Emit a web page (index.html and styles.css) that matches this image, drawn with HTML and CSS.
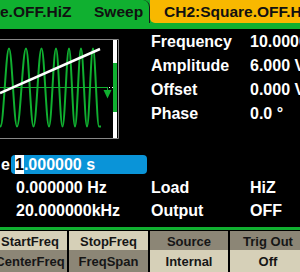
FILE: index.html
```html
<!DOCTYPE html>
<html>
<head>
<meta charset="utf-8">
<link rel="stylesheet" href="styles.css">
</head>
<body>
<div class="screen">
  <header class="header">
    <div class="tab tab-ch1">e.OFF.HiZ</div>
    <div class="tab tab-sweep">Sweep</div>
    <div class="tab tab-ch2">CH2:Square.OFF.HiZ</div>
  </header>

  <section class="top">
    <div class="graph">
      <svg class="wave" width="120" height="102" viewBox="0 38 120 102">
        <path class="frame" d="M-2 39.5 H118.5 V138.5 H-2"/>
        <rect x="113" y="40" width="4" height="23" fill="#ffffff"/>
        <rect x="113" y="63" width="4" height="49" fill="#10b030"/>
        <rect x="113" y="112" width="4" height="26" fill="#ffffff"/>
        <path class="chirp" d="M-8.5,48.5 C-5.23,48.5 -2.77,126.5 0.5,126.5 C3.59,126.5 5.91,48.5 9,48.5 C11.9,48.5 14.1,126.5 17,126.5 C20.27,126.5 22.73,48.5 26,48.5 C28.72,48.5 30.78,126.5 33.5,126.5 C36.4,126.5 38.6,48.5 41.5,48.5 C44.22,48.5 46.28,126.5 49,126.5 C51.54,126.5 53.46,48.5 56,48.5 C58.36,48.5 60.14,126.5 62.5,126.5 C64.86,126.5 66.64,48.5 69,48.5 C71.18,48.5 72.82,126.5 75,126.5 C77.18,126.5 78.82,48.5 81,48.5 C83.18,48.5 84.82,126.5 87,126.5 C89.18,126.5 90.82,48.5 93,48.5 C95.18,48.5 96.82,126.5 99,126.5 L101,126.5"/>
        <path class="marker-line" d="M0 87.5 H108 M107.5 87 V91"/>
        <rect x="109" y="87" width="1" height="1" fill="#ffffff"/>
        <rect x="112" y="87" width="1" height="1" fill="#ffffff"/>
        <polygon points="103.5,90 111.5,90 107.5,98.5" fill="#10b030"/>
        <path class="ramp" d="M0 93 L100 49"/>
      </svg>
    </div>
    <div class="params">
      <span>Frequency</span><span>10.000000kHz</span>
      <span>Amplitude</span><span>6.000 Vpp</span>
      <span>Offset</span><span>0.000 VDC</span>
      <span>Phase</span><span>0.0 °</span>
    </div>
  </section>

  <section class="fields">
    <div class="edit-row"><span class="cut">e</span><span class="edit"><span class="cursor">1</span>.000000 s</span></div>
    <div></div><div></div>
    <div class="fv">0.000000 Hz</div><div>Load</div><div>HiZ</div>
    <div class="fv">20.000000kHz</div><div>Output</div><div>OFF</div>
  </section>

  <div class="rule"></div>

  <nav class="menu">
    <div class="key light c1">StartFreq</div>
    <div class="key light">StopFreq</div>
    <div class="key dark">Source</div>
    <div class="key dark c4">Trig Out</div>
    <div class="key dark c1 r2">CenterFreq</div>
    <div class="key dark r2">FreqSpan</div>
    <div class="key light r2">Internal</div>
    <div class="key light c4 r2">Off</div>
  </nav>
</div>
</body>
</html>
```

FILE: styles.css
```css
html, body {
  margin: 0;
  padding: 0;
  background: #000;
}

.screen {
  width: 300px;
  height: 272px;
  overflow: hidden;
  background: #000;
  color: #fff;
  font-family: "Liberation Sans", Arial, sans-serif;
  font-weight: bold;
  font-size: 16px;
}

.header {
  display: flex;
  align-items: flex-start;
  height: 29px;
  background: #10b030;
  color: #111;
  font-size: 15.5px;
  line-height: 23px;
  white-space: nowrap;
}

.tab {
  height: 23px;
}

.tab-ch1 {
  width: 94px;
  flex: none;
}

.tab-sweep {
  width: 55px;
  flex: none;
  border-right: 1px solid #1a1a1a;
  border-top-right-radius: 7px;
}

.tab-ch2 {
  flex: 1;
  min-width: 0;
  overflow: hidden;
  background: #f8b800;
  padding-left: 14px;
  border-bottom-left-radius: 5px;
}

.top {
  display: flex;
  height: 124px;
}

.graph {
  width: 151px;
  flex: none;
}

.wave {
  display: block;
  margin-top: 9px;
}

.frame {
  fill: none;
  stroke: #888888;
  stroke-width: 1;
}

.chirp {
  fill: none;
  stroke: #10b030;
  stroke-width: 2;
}

.marker-line {
  fill: none;
  stroke: #10b030;
  stroke-width: 1;
}

.ramp {
  fill: none;
  stroke: #ffffff;
  stroke-width: 2.5;
}

.params {
  flex: 1;
  min-width: 0;
  display: grid;
  grid-template-columns: 99px 1fr;
  grid-auto-rows: 24px;
  line-height: 24px;
  padding-top: 1px;
  white-space: nowrap;
  overflow: hidden;
  align-content: start;
}

.params span {
  overflow: hidden;
}

.fields {
  display: grid;
  grid-template-columns: 151px 99px 1fr;
  grid-template-rows: repeat(3, 23px);
  line-height: 23px;
  white-space: nowrap;
}

.edit-row {
  display: flex;
  align-items: center;
}

.cut {
  width: 11px;
  padding-left: 1px;
  box-sizing: border-box;
  flex: none;
}

.edit {
  display: flex;
  width: 136px;
  height: 19.5px;
  line-height: 19.5px;
  background: #0a94d8;
  border-radius: 4px;
  padding-left: 4px;
  box-sizing: border-box;
}

.cursor {
  background: #fff;
  color: #000;
}

.fv {
  padding-left: 16px;
}

.rule {
  margin-top: 5px;
  height: 3px;
  background: #10b030;
}

.menu {
  margin-top: 1px;
  display: grid;
  grid-template-columns: 67px 79px 78px 1fr;
  grid-template-rows: 19px 22px;
  column-gap: 2px;
  font-size: 13px;
  color: #161616;
  white-space: nowrap;
}

.key {
  display: flex;
  justify-content: center;
  align-items: flex-start;
  box-sizing: border-box;
  padding-top: 3px;
  line-height: 16px;
  overflow: hidden;
}

.key.r2 {
  padding-top: 4px;
}

.light {
  background: #d6d0b8;
}

.dark {
  background: #8c8676;
}

.c1 {
  padding-right: 7px;
}

.c4 {
  padding-left: 6px;
}
```
